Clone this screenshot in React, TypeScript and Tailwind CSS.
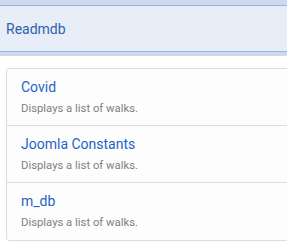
const items = [
  { title: "Covid", description: "Displays a list of walks." },
  { title: "Joomla Constants", description: "Displays a list of walks." },
  { title: "m_db", description: "Displays a list of walks." },
];

export default function App() {
  return (
    <div className="w-[287px] h-[252px] overflow-hidden bg-white font-['Roboto',sans-serif]">
      {/* Header */}
      <div className="border-t-[5px] border-b-[4px] border-t-[#cdd9ec] border-b-[#cdd9ec]">
        <div className="h-[47px] flex items-center pt-[1px] px-[6px] bg-[#e8eef7] border-y border-[#9db5da]">
          <h1 className="text-[14px] text-[#2d62ad]">Readmdb</h1>
        </div>
      </div>

      {/* List */}
      <div className="mt-[12px] ml-[6px] w-[300px] bg-[#fdfdfd] border border-[#dcdcdc] rounded-[3px]">
        {items.map((item, i) => (
          <div
            key={item.title}
            className={
              "h-[57px] px-[14px] pt-[8px] " +
              (i < items.length - 1 ? "border-b border-[#dcdcdc]" : "")
            }
          >
            <div className="text-[14px] leading-[20px] text-[#1f63c7]">{item.title}</div>
            <div className="mt-[4px] text-[11.3px] leading-[16px] text-[#808080]">
              {item.description}
            </div>
          </div>
        ))}
      </div>
    </div>
  );
}
